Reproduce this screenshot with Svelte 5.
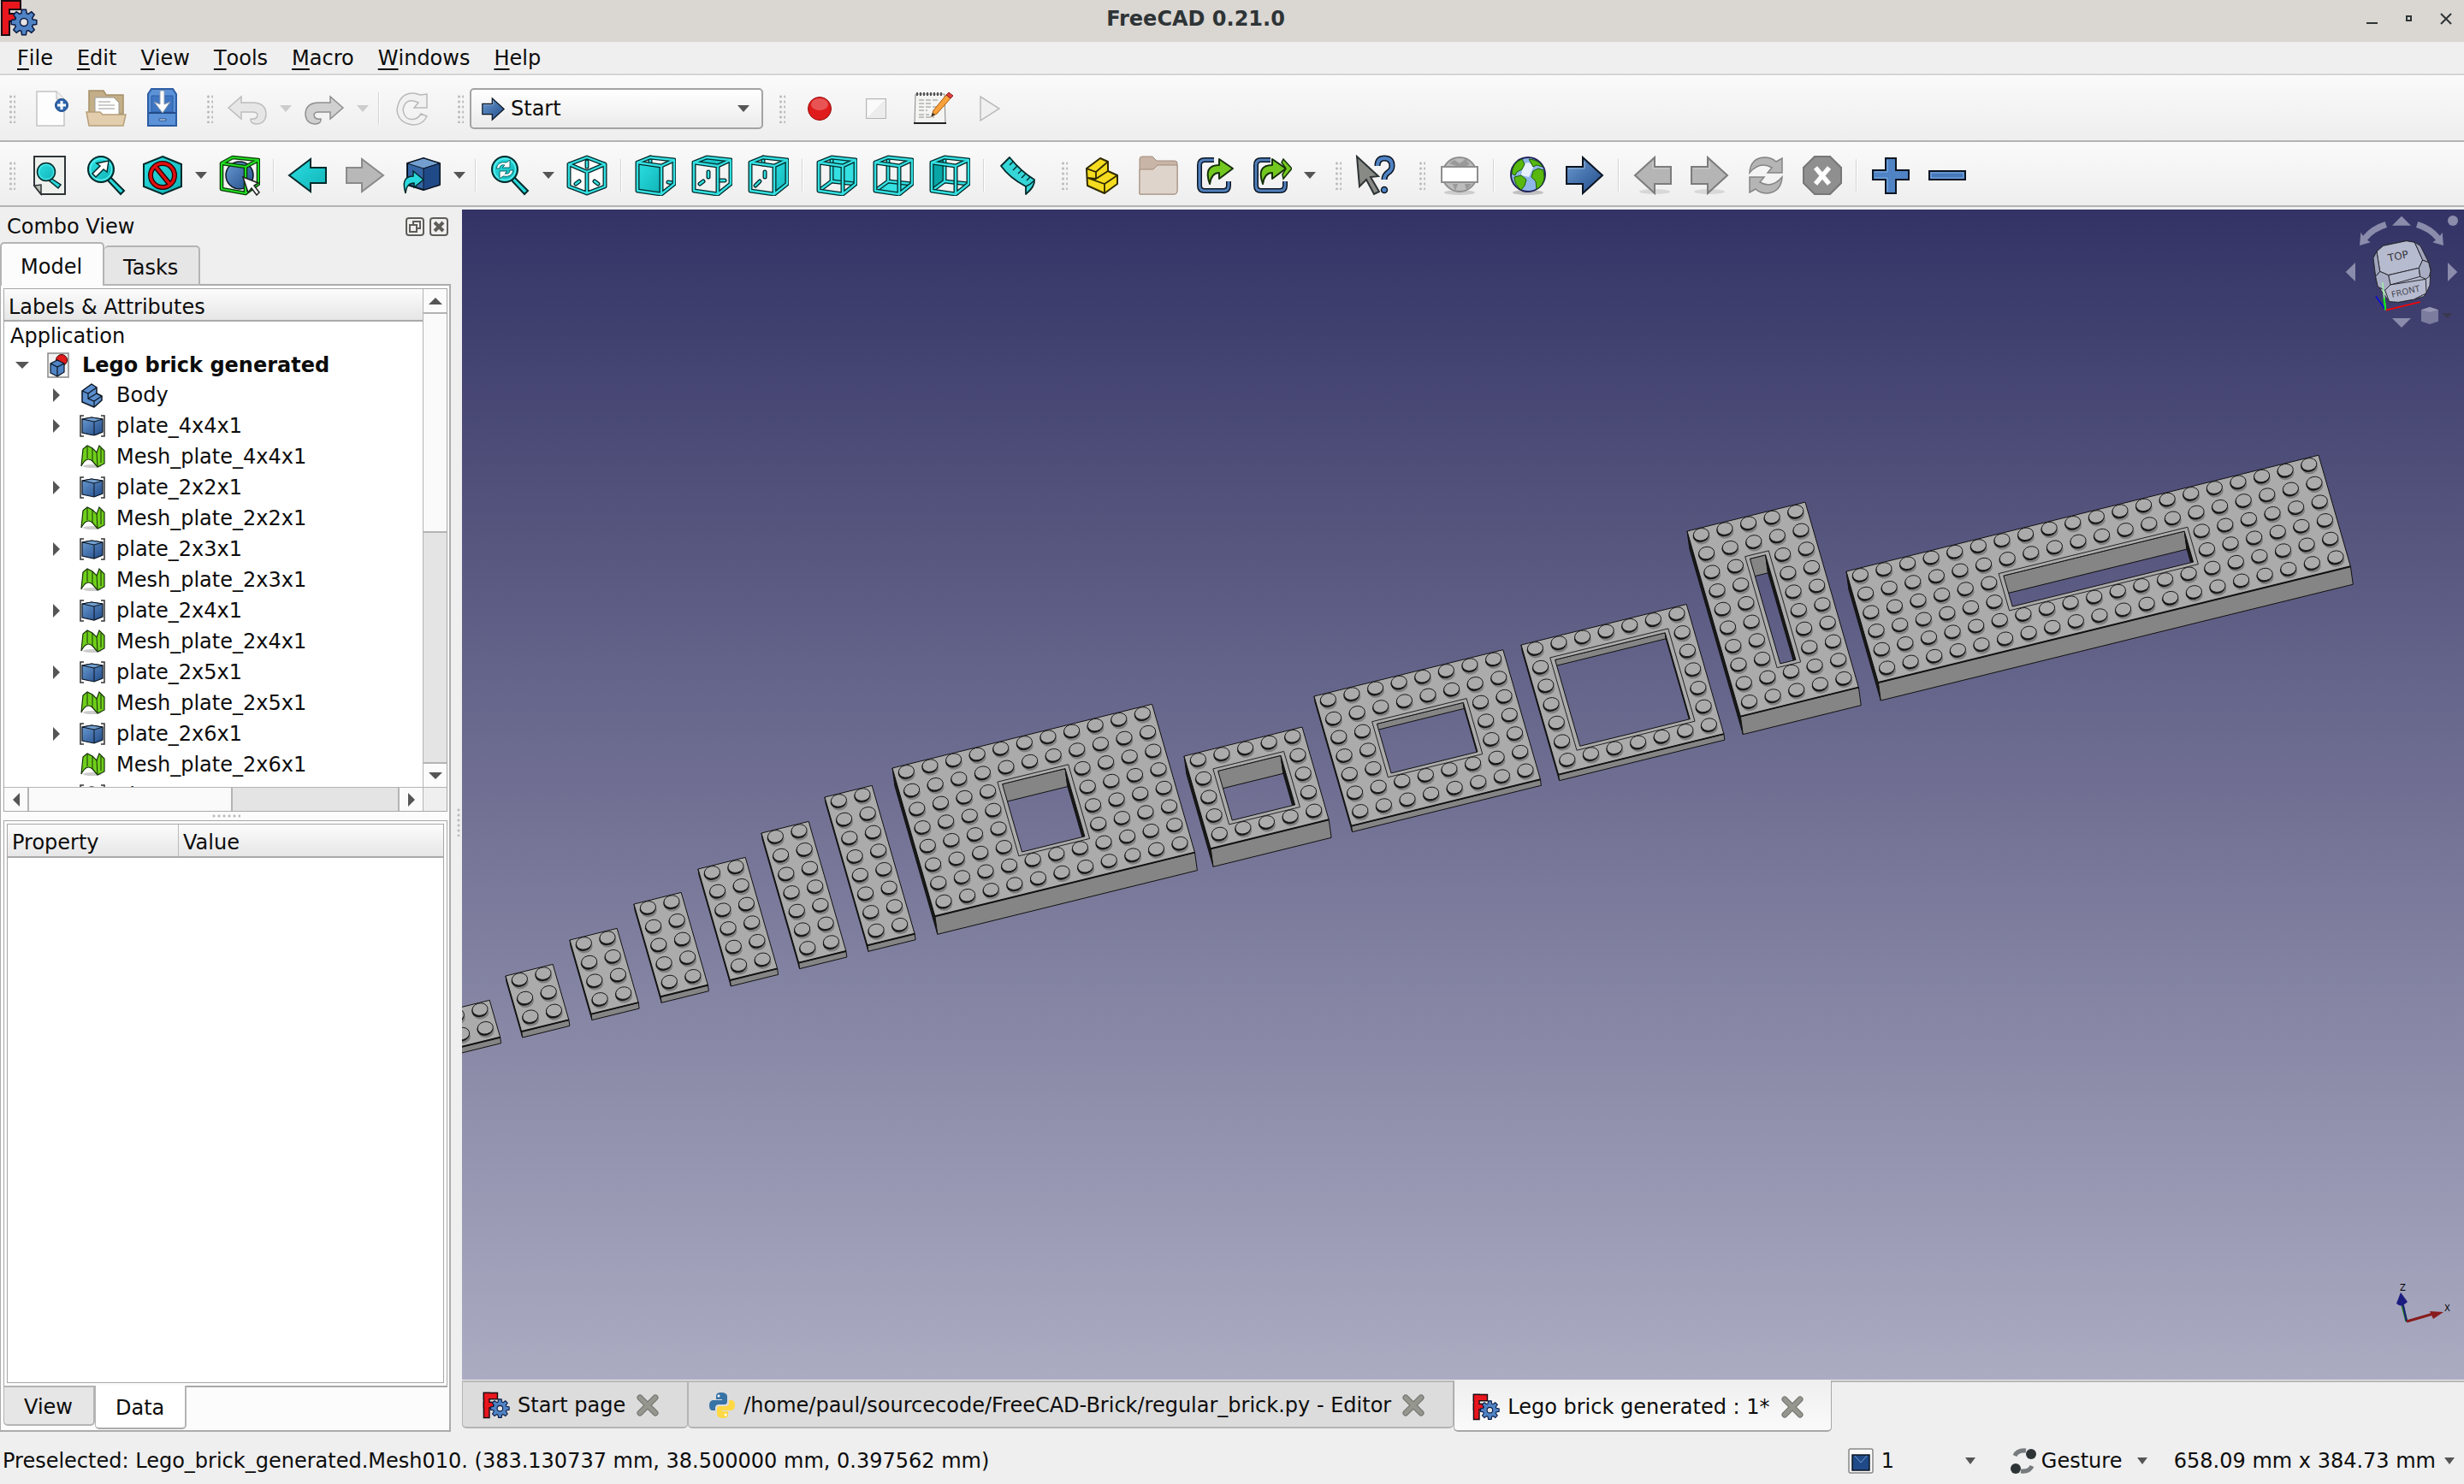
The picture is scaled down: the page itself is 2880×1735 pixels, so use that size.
<script>
  const menus = ['File', 'Edit', 'View', 'Tools', 'Macro', 'Windows', 'Help'];

  const fileBar = [
    [{ icon: 'new' }, { icon: 'open' }, { icon: 'save' }],
    [{ icon: 'undo', drop: true, off: true }, { icon: 'redo', drop: true, off: true }, { sep: true }, { icon: 'reload' }],
    [{ workbench: true }],
    [{ icon: 'record' }, { icon: 'stop' }, { icon: 'macro' }, { icon: 'play' }]
  ];

  const viewBar = [
    [
      { icon: 'fitall' }, { icon: 'fitsel' }, { icon: 'drawstyle', drop: true }, { icon: 'boxsel' }, { sep: true },
      { icon: 'back' }, { icon: 'forward' }, { icon: 'link', drop: true }, { sep: true },
      { icon: 'sync', drop: true }, { icon: 'iso' }, { sep: true },
      { icon: 'front' }, { icon: 'top' }, { icon: 'right' }, { sep: true },
      { icon: 'rear' }, { icon: 'bottom' }, { icon: 'left' }, { sep: true }, { icon: 'ruler' }
    ],
    [{ icon: 'part' }, { icon: 'group' }, { icon: 'export' }, { icon: 'exports', drop: true }],
    [{ icon: 'whats' }],
    [
      { icon: 'url' }, { sep: true }, { icon: 'globe' }, { icon: 'start' }, { sep: true },
      { icon: 'prev' }, { icon: 'next' }, { icon: 'refresh' }, { icon: 'cancel' }, { sep: true },
      { icon: 'plus' }, { icon: 'minus' }
    ]
  ];

  const rows = [{ kind: 'body', label: 'Body' }];
  for (const size of ['4x4x1', '2x2x1', '2x3x1', '2x4x1', '2x5x1', '2x6x1']) {
    rows.push({ kind: 'plate', label: 'plate_' + size });
    rows.push({ kind: 'mesh', label: 'Mesh_plate_' + size });
  }
  rows.push({ kind: 'plate', label: 'plate_2x7x1' });

  const docs = [
    { icon: 'logo', label: 'Start page' },
    { icon: 'python', label: '/home/paul/sourcecode/FreeCAD-Brick/regular_brick.py - Editor' },
    { icon: 'logo', label: 'Lego brick generated : 1*' }
  ];

  let sideTab = $state('Model');
  let propTab = $state('Data');
  let activeDoc = $state(2);

  // screen vectors of one stud along x, one stud along y, and one brick height
  const U = [27.6, -6.79];
  const V = [6.24, 21.66];
  const H = [2.9, 21];

  const bricks = [
    { x: -23, y: 938, nx: 2, ny: 2, h: 1 / 3 },
    { x: 51, y: 896, nx: 2, ny: 3, h: 1 / 3 },
    { x: 126, y: 854, nx: 2, ny: 4, h: 1 / 3 },
    { x: 201, y: 812, nx: 2, ny: 5, h: 1 / 3 },
    { x: 276, y: 771, nx: 2, ny: 6, h: 1 / 3 },
    { x: 350, y: 729, nx: 2, ny: 7, h: 1 / 3 },
    { x: 424, y: 687, nx: 2, ny: 8, h: 1 / 3 },
    { x: 503, y: 653, nx: 11, ny: 8, h: 1, hole: [4, 2, 3, 4] },
    { x: 844, y: 639, nx: 5, ny: 5, h: 1, hole: [1, 1, 3, 3] },
    { x: 996, y: 569, nx: 8, ny: 7, h: 1 / 3, hole: [2, 2, 4, 3] },
    { x: 1238, y: 509, nx: 7, ny: 7, h: 1 / 3, hole: [1, 1, 5, 5] },
    { x: 1432, y: 376, nx: 5, ny: 10, h: 1, hole: [2, 2, 1, 6] },
    { x: 1618, y: 423, nx: 20, ny: 6, h: 1, hole: [6, 2, 8, 2] }
  ].map(build);

  function build(b) {
    const at = (i, j, k = 0) => [
      b.x + i * U[0] + j * V[0] + k * H[0],
      b.y + i * U[1] + j * V[1] + k * H[1]
    ];
    const path = (...pts) => 'M' + pts.map((p) => p[0].toFixed(1) + ' ' + p[1].toFixed(1)).join('L') + 'Z';
    const { nx, ny, h, hole } = b;
    const top = path(at(0, 0), at(nx, 0), at(nx, ny), at(0, ny));
    const out = {
      top,
      edge: path(at(0, ny), at(nx, ny)),
      left: path(at(0, 0), at(0, ny), at(0, ny, h), at(0, 0, h)),
      front: path(at(0, ny), at(nx, ny), at(nx, ny, h), at(0, ny, h)),
      studs: []
    };
    if (hole) {
      const [c, r, w, d] = hole;
      const e = 0.17;
      const x0 = c + e, x1 = c + w - e, y0 = r + e, y1 = r + d - e;
      out.rim = path(at(c, r), at(c + w, r), at(c + w, r + d), at(c, r + d));
      out.hole = path(at(x0, y0), at(x1, y0), at(x1, y1), at(x0, y1));
      out.back = path(at(x0, y0), at(x1, y0), at(x1, y0, h), at(x0, y0, h));
      out.side = path(at(x1, y0), at(x1, y1), at(x1, y1, h), at(x1, y0, h));
    }
    for (let j = 0; j < ny; j++) {
      for (let i = 0; i < nx; i++) {
        if (hole && i >= hole[0] && i < hole[0] + hole[2] && j >= hole[1] && j < hole[1] + hole[3]) continue;
        out.studs.push(at(i + 0.5, j + 0.5, -0.17));
      }
    }
    return out;
  }

  function gear(cx, cy, r) {
    const pts = [];
    for (let i = 0; i < 8; i++) {
      for (const [da, k] of [[-0.3, 0.72], [-0.16, 1], [0.16, 1], [0.3, 0.72]]) {
        const a = (i * Math.PI) / 4 + da;
        pts.push((cx + Math.cos(a) * r * k).toFixed(1) + ',' + (cy + Math.sin(a) * r * k).toFixed(1));
      }
    }
    return pts.join(' ');
  }

  const cubeFaces = {
    front: 'M3 9L31 13V46L3 42Z',
    top: 'M3 9L18 3L46 6L31 13Z',
    right: 'M31 13L46 6V34L31 46Z',
    rear: 'M18 3L46 6V34L18 31Z',
    bottom: 'M3 42L18 31L46 34L31 46Z',
    left: 'M3 9L18 3V31L3 42Z'
  };
  const shell = 'M3 9L31 13V46L3 42ZM3 9L18 3L46 6L31 13M46 6V34L31 46';
  const inner = 'M18 3V31L46 34M18 31L3 42';
  const marks = {
    front: 'M18 3V10M39 32L45 33',
    top: 'M20 20V26M10 34L14 31M33 30L39 30',
    right: 'M18 3V11M20 20V26M9 36L14 31'
  };
</script>

{#snippet logo()}
  <svg class="logo" viewBox="0 0 44 42">
    <g fill="#1a0d12"><rect width="11" height="42" x="1" /><rect x="1" width="24" height="12" /><rect x="1" y="15" width="18" height="11" /></g>
    <g fill="#e8161d"><rect x="3" y="2" width="7" height="38" /><rect x="3" y="2" width="20" height="8" /><rect x="3" y="17" width="14" height="7" /></g>
    <polygon points={gear(28, 26, 15)} fill="#4f83c4" stroke="#0b1a45" stroke-width="1.5" />
    <circle cx="28" cy="26" r="4.5" fill="#e6e4e2" stroke="#0b1a45" stroke-width="1.5" />
  </svg>
{/snippet}

{#snippet arrow(fill, stroke, flip)}
  <g transform={flip ? 'matrix(-1 0 0 1 48 0)' : null}>
    <path d="M3 14H22V3L45 24L22 45V34H3Z" {fill} {stroke} stroke-width="2" />
    <path d="M5 16H24V8" fill="none" stroke="#fff" stroke-opacity=".4" />
  </g>
{/snippet}

{#snippet lens()}
  <path d="M29 26L45 42L41 46L26 30Z" fill="#2ad9dc" stroke="#042a2a" stroke-width="2" />
  <circle cx="18" cy="17" r="15" fill="url(#teal)" stroke="#042a2a" stroke-width="2" />
  <circle cx="18" cy="17" r="12.5" fill="none" stroke="#5cf0f0" stroke-width="1.5" />
{/snippet}

{#snippet icon(name)}
  <svg class="icon" viewBox="0 0 48 48">
    {#if name === 'new'}
      <path d="M9 4H32L41 13V44H9Z" fill="#fdfdfd" stroke="#c4c4c4" stroke-width="1.5" />
      <path d="M32 4V13H41" fill="#eee" stroke="#bbb" />
      <circle cx="38" cy="20" r="7.5" fill="#2f66ac" stroke="#1c4a8a" />
      <path d="M38 15V25M33 20H43" stroke="#fff" stroke-width="3" />
    {:else if name === 'open'}
      <path d="M4 3H21L24 8H44V30H4Z" fill="#c3ae88" stroke="#a58e66" stroke-width="1.5" />
      <path d="M11 11H33L39 17V34H11Z" fill="#fff" stroke="#9a9a9a" />
      <path d="M15 16H29M15 20H34M15 24H34" stroke="#bbb" stroke-width="1.5" />
      <path d="M1 28H17L20 31H47L44 44H4Z" fill="#e2cdac" stroke="#b79f78" stroke-width="1.5" />
    {:else if name === 'save'}
      <path d="M11 1H36L40 7V44H7V7Z" fill="#5b92d8" stroke="#2c5ca3" stroke-width="2" />
      <path d="M11 9H36V28H11Z" fill="#3f76c2" stroke="#2c5ca3" />
      <path d="M8 29H39" stroke="#234b88" stroke-width="2" />
      <path d="M20 36H28V38H20Z" fill="#fff" stroke="#234b88" />
      <path d="M21 3H26V19L33 16L24 29L14 16L21 19Z" fill="#fff" stroke="#8a9bb0" />
    {:else if name === 'undo' || name === 'redo'}
      <g transform={name === 'redo' ? 'matrix(-1 0 0 1 48 0)' : null}>
        <path d="M2 23L17 10V17H32Q46 18 46 31Q45 42 34 42Q27 41 28 36Q36 37 36 31Q35 28 31 28H17V36Z"
          fill={name === 'redo' ? '#d0d0d0' : '#e6e6e6'} stroke={name === 'redo' ? '#8f8f8f' : '#bdbdbd'} stroke-width="1.5" />
      </g>
    {:else if name === 'reload'}
      <path d="M32 8L40 7V23H25L30 17Q15 10 12 25Q14 39 26 36Q30 35 33 30L40 33Q35 43 24 43Q6 41 5 25Q8 5 25 6Q30 7 32 8Z" fill="#f1f1f1" stroke="#b9b9b9" stroke-width="1.5" />
    {:else if name === 'record'}
      <circle cx="24" cy="24" r="13.5" fill="#e01b1b" stroke="#9a0b0b" />
      <ellipse cx="24" cy="19" rx="10" ry="7" fill="#fff" opacity=".25" />
    {:else if name === 'stop'}
      <rect x="12.5" y="12.5" width="23" height="23" fill="#ececec" stroke="#b5b5b5" /><path d="M14 34V14H34Z" fill="#fafafa" />
    {:else if name === 'macro'}
      <path d="M4 7H38L39 41H3Z" fill="#f4f4f2" stroke="#888" />
      <path d="M2 41H40" stroke="#222" stroke-width="2" />
      <path d="M6 5V9M10 5V9M14 5V9M18 5V9M22 5V9M26 5V9M30 5V9M34 5V9" stroke="#555" stroke-width="2" />
      <path d="M8 14H30M8 18H24M8 22H30M8 26H18M8 31H20M8 34H26" stroke="#b0b0b0" stroke-width="1.5" stroke-dasharray="6 2" />
      <path d="M23 33L25 26L40 8L45 12L29 30Z" fill="#f9a13b" stroke="#a85a08" />
      <path d="M40 8L43 5L48 9L45 12Z" fill="#e04040" stroke="#8c2020" /><path d="M22 34L24 29L27 31Z" fill="#333" />
    {:else if name === 'play'}
      <path d="M14 10L36 24L14 38Z" fill="#f0f0f0" stroke="#bcbcbc" stroke-width="1.5" />
    {:else if name === 'fitall'}
      <path d="M6 2H42V46H14L6 36Z" fill="#edf0ec" stroke="#2e3436" stroke-width="2" />
      <path d="M6 36L14 35V46Z" fill="#babdb6" stroke="#2e3436" stroke-width="1.5" />
      <path d="M25 27L37 35L34 39L22 29Z" fill="#2ad9dc" stroke="#042a2a" stroke-width="1.5" />
      <circle cx="20" cy="20" r="10.5" fill="url(#teal)" stroke="#042a2a" stroke-width="1.5" />
      <circle cx="20" cy="20" r="8.5" fill="none" stroke="#5cf0f0" />
    {:else if name === 'fitsel'}
      {@render lens()}
      <path d="M27 7L25 20L21 17L12 26L8 22L17 13L13 10Z" fill="#fff" stroke="#042a2a" stroke-width="1.5" />
    {:else if name === 'drawstyle'}
      <path d="M24 2L46 11V37L24 46L2 37V11Z" fill="url(#teal)" stroke="#042a2a" stroke-width="2" />
      <g fill="none" stroke="#280000" stroke-width="6"><circle cx="24" cy="24" r="14" /><path d="M15 13L33 35" /></g>
      <g fill="none" stroke="#e01010" stroke-width="3.4"><circle cx="24" cy="24" r="14" /><path d="M15 13L33 35" /></g>
    {:else if name === 'boxsel'}
      <ellipse cx="24" cy="24" rx="16" ry="16" fill="url(#blue)" stroke="#0b1521" stroke-width="1.5" />
      <path d="M3 10L16 3L46 6L31 14ZM3 10V40L31 45V14M46 6V34L31 45" fill="none" stroke="#0a3a0a" stroke-width="4.6" stroke-linejoin="round" />
      <path d="M3 10L16 3L46 6L31 14ZM3 10V40L31 45V14M46 6V34L31 45" fill="none" stroke="#1fdc1f" stroke-width="2" stroke-linejoin="round" />
      <path d="M28 26L46 33L41 36L47 44L44 47L38 39L34 44Z" fill="#fff" stroke="#222" stroke-width="1.5" />
    {:else if name === 'back'}
      <path d="M2 24L27 5V15H45V33H27V43Z" fill="url(#teal)" stroke="#042a2a" stroke-width="2" />
    {:else if name === 'forward'}
      <path d="M46 24L21 5V15H3V33H21V43Z" fill="#b8b8b8" stroke="#8a8a8a" stroke-width="2" />
    {:else if name === 'link'}
      <path d="M8 10L27 4L46 10V35L27 41L8 35Z" fill="#3465a4" stroke="#0b1521" stroke-width="2" stroke-linejoin="round" />
      <path d="M8 10L27 4L46 10L27 16Z" fill="#729fcf" stroke="#0b1521" /><path d="M27 16L46 10V35L27 41Z" fill="#204a87" stroke="#0b1521" />
      <path d="M6 45Q0 25 15 25V19L27 29L16 38V33Q7 33 6 45Z" fill="#2ad9dc" stroke="#042a2a" stroke-width="1.5" />
    {:else if name === 'sync'}
      {@render lens()}
      <path d="M8 16Q10 7 20 9L24 6V15H15L18 12Q12 11 12 16ZM28 18Q26 27 16 25L12 28V19H21L18 22Q24 23 24 18Z" fill="#fff" stroke="#06686a" />
    {:else if name === 'iso'}
      <path d="M24 2L46 11V37L24 46L2 37V11Z" fill="#fff" />
      {#each [['#042a2a', 5], ['#34e0e2', 2.4]] as [c, w]}
        <path d="M24 3L45 11V37L24 45L3 37V11ZM3 11L24 20L45 11M24 20V45M24 8V14M15 31L11 34M33 31L37 34" fill="none" stroke={c} stroke-width={w} stroke-linejoin="round" stroke-linecap="round" />
      {/each}
    {:else if cubeFaces[name]}
      {#if marks[name]}
        {#each [['#042a2a', 5], ['#34e0e2', 2.4]] as [c, w]}
          <path d={marks[name]} fill="none" stroke={c} stroke-width={w} stroke-linecap="round" />
        {/each}
        <path d={cubeFaces[name]} fill="url(#teal)" />
      {:else}
        <path d={cubeFaces[name]} fill={name === 'left' ? '#08a5a7' : '#34e0e2'} />
        <path d={inner} fill="none" stroke="#042a2a" stroke-width="5" />
        <path d={inner} fill="none" stroke="#34e0e2" stroke-width="2.4" />
      {/if}
      {#each [['#042a2a', 5], ['#34e0e2', 2.4]] as [c, w]}
        <path d={shell} fill="none" stroke={c} stroke-width={w} stroke-linejoin="round" />
      {/each}
    {:else if name === 'ruler'}
      <path d="M4 13L14 3Q28 20 43 29Q44 37 33 46V37Q14 27 4 13Z" fill="#34d6d8" stroke="#042a2a" stroke-width="1.8" stroke-linejoin="round" />
      <path d="M18 8L14 12M23 13L18 18M28 18L24 22M33 22L28 27M38 26L34 30M33 37Q38 35 43 30" fill="none" stroke="#042a2a" stroke-width="1.4" />
    {:else if name === 'part'}
      <path d="M6 16L22 4L31 8V19L42 24V34L27 45L7 36Z" fill="#f5dc1e" stroke="#302b00" stroke-width="2" stroke-linejoin="round" />
      <path d="M6 16L17 20L31 8M17 20V28L31 19M7 27L27 34L42 24M27 34V45M17 28L7 27" fill="none" stroke="#302b00" stroke-width="1.8" />
    {:else if name === 'group'}
      <path d="M2 5Q2 2 5 2H17L22 7H43Q46 7 46 10V42Q46 46 43 46H2Z" fill="#c9b5a7" stroke="#a08b7c" />
      <path d="M2 17H18L23 12H46V42Q46 46 43 46H2Z" fill="#ded4cb" stroke="#a08b7c" />
    {:else if name === 'export' || name === 'exports'}
      <path d="M23 6H12Q6 6 6 12V36Q6 42 12 42H34Q40 42 40 36V31" fill="none" stroke="#0b1521" stroke-width="6" />
      <path d="M23 6H12Q6 6 6 12V36Q6 42 12 42H34Q40 42 40 36V31" fill="none" stroke="#5080bd" stroke-width="3" />
      <path d="M18 34Q10 12 29 12V5L45 16L29 28V21Q20 21 18 34Z" fill="#73c820" stroke="#16300a" stroke-width="2" stroke-linejoin="round" transform={name === 'exports' ? 'translate(-4 0)' : null} />
      {#if name === 'exports'}<path d="M38 5L48 16L38 28L37 23L41 16L36 9Z" fill="#73c820" stroke="#16300a" stroke-width="1.5" />{/if}
    {:else if name === 'whats'}
      <path d="M2 2L27 25L18 26L28 43L22 46L13 29L5 37Z" fill="#888a85" stroke="#2e3436" stroke-width="2" />
      <path d="M26 13Q26 4 34 4Q43 4 43 13Q43 18 38 21Q34 24 34 29" fill="none" stroke="#0b1521" stroke-width="7" />
      <path d="M26 13Q26 4 34 4Q43 4 43 13Q43 18 38 21Q34 24 34 29" fill="none" stroke="#4f83c4" stroke-width="4" />
      <circle cx="34" cy="41" r="3.5" fill="#4f83c4" stroke="#0b1521" stroke-width="1.5" />
    {:else if name === 'url'}
      <ellipse cx="24" cy="44" rx="18" ry="3" fill="#000" opacity=".15" />
      <circle cx="24" cy="23" r="20" fill="#bcbcbc" stroke="#8e8e8e" stroke-width="2" />
      <path d="M12 10L18 6L24 10L31 5L36 11L28 15L20 13ZM16 34H22L19 42ZM30 34H38L32 41Z" fill="#999" />
      <rect x="3" y="14" width="42" height="18" fill="#fff" stroke="#8e8e8e" stroke-width="2" />
    {:else if name === 'globe'}
      <ellipse cx="24" cy="44" rx="18" ry="3" fill="#000" opacity=".2" />
      <circle cx="24" cy="23" r="20" fill="#8fb6e8" stroke="#23235c" stroke-width="2" />
      <path d="M18 12Q26 5 30 15L25 26L16 24Z" fill="#e6f0ff" />
      <path d="M5 22Q6 9 17 5L20 11L17 17L11 20L9 24ZM8 26L16 24L22 29L20 36L16 41Q8 35 8 26ZM25 5Q37 6 41 14L34 12L30 14ZM30 19L36 16L42 18L43 26Q42 36 34 40L33 31L28 26Z" fill="#58b810" stroke="#1c5a06" />
    {:else if name === 'start'}
      {@render arrow('url(#blue)', '#0b1521', false)}
    {:else if name === 'prev'}
      <ellipse cx="26" cy="43" rx="18" ry="3" fill="#000" opacity=".1" />{@render arrow('#b5b5b5', '#7c7c7c', true)}
    {:else if name === 'next'}
      <ellipse cx="24" cy="43" rx="18" ry="3" fill="#000" opacity=".1" />{@render arrow('#b5b5b5', '#7c7c7c', false)}
    {:else if name === 'refresh'}
      <path d="M5 21Q6 4 22 3Q31 3 36 8L43 4V21H26L31 15Q17 7 5 21ZM43 26Q42 43 26 45Q17 45 12 40L5 44V26H22L17 32Q31 40 43 26Z" fill="#b5b5b5" stroke="#858585" stroke-width="1.5" />
    {:else if name === 'cancel'}
      <path d="M15 2H33L46 15V33L33 46H15L2 33V15Z" fill="#8f8f8f" stroke="#777" stroke-width="2" />
      <path d="M16 15L32 34M32 15L16 34" stroke="#fff" stroke-width="5.5" />
    {:else if name === 'plus'}
      <path d="M18 4H30V18H45V29H30V45H18V29H3V18H18Z" fill="#4f83c4" stroke="#0b1521" stroke-width="2" />
      <path d="M20 43V27H5M20 6V20H5" fill="none" stroke="#7fb0e6" />
    {:else if name === 'minus'}
      <rect x="3" y="19" width="42" height="10" fill="#4678ba" stroke="#0b1521" stroke-width="2" /><rect x="5" y="21" width="38" height="6" fill="none" stroke="#7fb0e6" />
    {/if}
  </svg>
{/snippet}

{#snippet toolbar(groups)}
  <div class="toolbar">
    {#each groups as group}
      <div class="group">
        <span class="handle"></span>
        {#each group as item}
          {#if item.sep}
            <span class="sep"></span>
          {:else if item.workbench}
            <div class="workbench">
              <svg viewBox="0 0 48 48">{@render arrow('url(#blue)', '#0b1521', false)}</svg>
              <select aria-label="Workbench"><option>Start</option><option>Part</option><option>Part Design</option></select>
              <span class="caret"></span>
            </div>
          {:else}
            <button class="tool" aria-label={item.icon}>{@render icon(item.icon)}</button>
            {#if item.drop}
              <button class="drop" aria-label="{item.icon} options"><span class="caret" class:off={item.off}></span></button>
            {/if}
          {/if}
        {/each}
      </div>
    {/each}
  </div>
{/snippet}

<svg class="defs" aria-hidden="true">
  <defs>
    <linearGradient id="teal" x1="0" y1="0" x2="1" y2="1"><stop offset="0" stop-color="#2ce0e2" /><stop offset="1" stop-color="#0fb2b6" /></linearGradient>
    <linearGradient id="blue" x1="0" y1="0" x2="1" y2="1"><stop offset="0" stop-color="#6b9bd2" /><stop offset="1" stop-color="#204a87" /></linearGradient>
  </defs>
</svg>

<div class="app">
  <header class="titlebar">
    {@render logo()}
    <h1>FreeCAD 0.21.0</h1>
    <button aria-label="Minimize"><svg viewBox="0 0 14 14"><path d="M0 12H13" /></svg></button>
    <button aria-label="Maximize"><svg viewBox="0 0 14 14"><path d="M4 4H9V9H4Z" /></svg></button>
    <button aria-label="Close"><svg viewBox="0 0 14 14"><path d="M1 1L13 13M13 1L1 13" /></svg></button>
  </header>

  <nav class="menubar">
    {#each menus as menu}
      <button><u>{menu[0]}</u>{menu.slice(1)}</button>
    {/each}
  </nav>

  {@render toolbar(fileBar)}
  {@render toolbar(viewBar)}

  <main>
    <aside>
      <div class="dock-title">
        <h2>Combo View</h2>
        <button aria-label="Float"><svg viewBox="0 0 22 22"><rect x="1" y="1" width="20" height="20" rx="3" /><path d="M9 8V5H17V13H14M5 9H13V17H5Z" /></svg></button>
        <button aria-label="Close"><svg viewBox="0 0 22 22"><rect x="1" y="1" width="20" height="20" rx="3" /><path d="M6 6L16 16M16 6L6 16" stroke-width="4" /></svg></button>
      </div>
      <div class="tabs">
        {#each ['Model', 'Tasks'] as tab}
          <button class:active={sideTab === tab} onclick={() => (sideTab = tab)}>{tab}</button>
        {/each}
      </div>
      <div class="pane">
        <section class="tree">
          <div class="tree-view">
            <div class="tree-head">Labels &amp; Attributes</div>
            <ul>
              <li class="app-row">Application</li>
              <li class="doc-row">
                <span class="twist open"></span>
                <svg class="doc-icon" viewBox="0 0 26 30">
                  <rect x="1" y="1" width="24" height="28" fill="#f2f2f2" stroke="#888" stroke-width="1.5" />
                  <circle cx="17" cy="9" r="6.5" fill="#e01b1b" stroke="#400" />
                  <path d="M4 13L12 9L20 13V23L12 28L4 24Z" fill="#4f83c4" stroke="#0b1521" stroke-width="1.2" />
                  <path d="M4 13L12 17L20 13M12 17V28" fill="none" stroke="#0b1521" stroke-width="1.2" />
                </svg>
                Lego brick generated
              </li>
              {#each rows as row}
                <li>
                  <span class="twist" class:none={row.kind === 'mesh'}></span>
                  <svg class="row-icon" viewBox="0 0 30 30">
                    {#if row.kind === 'body'}
                      <path d="M3 10L14 2L20 6V13L26 16V21L17 29L3 23Z" fill="#5b8fce" stroke="#0b1521" stroke-width="1.5" stroke-linejoin="round" />
                      <path d="M3 10L10 13L20 6M10 13V19L17 22L26 16M10 19L20 13M17 22V29" fill="none" stroke="#0b1521" stroke-width="1.2" />
                    {:else if row.kind === 'plate'}
                      <path d="M5 3H1V27H5M25 3H29V27H25" fill="none" stroke="#333" stroke-width="1.5" />
                      <path d="M3 7L14 5L27 7V22L17 26L3 23Z" fill="url(#blue)" stroke="#0b1521" stroke-width="1.2" />
                      <path d="M3 7L14 5L27 7L17 10Z" fill="#729fcf" stroke="#0b1521" /><path d="M17 10V26" stroke="#0b1521" />
                    {:else}
                      <ellipse cx="15" cy="26" rx="11" ry="2" fill="#000" opacity=".2" />
                      <path d="M2 26L4 6L9 2L15 5L20 10L23 2L29 8V23L21 27L15 20Q8 14 2 26Z" fill="#6fcf1a" stroke="#16300a" stroke-width="1.2" />
                      <path d="M9 2V17M15 5V20M20 10L21 27M25 5V22" stroke="#16300a" />
                    {/if}
                  </svg>
                  {row.label}
                </li>
              {/each}
            </ul>
          </div>
          <div class="vscroll"><button aria-label="Up"><i class="up"></i></button><div class="thumb"></div><div class="track"></div><button aria-label="Down"><i class="down"></i></button></div>
          <div class="hscroll"><button aria-label="Left"><i class="lt"></i></button><div class="thumb"></div><div class="track"></div><button aria-label="Right"><i class="rt"></i></button></div>
          <div class="corner"></div>
        </section>
        <div class="splitter"></div>
        <section class="props">
          <div class="props-frame">
            <div class="props-inner">
              <table>
                <thead><tr><th class="prop">Property</th><th>Value</th></tr></thead>
              </table>
            </div>
          </div>
          <div class="tabs low">
            {#each ['View', 'Data'] as tab}
              <button class:active={propTab === tab} onclick={() => (propTab = tab)}>{tab}</button>
            {/each}
          </div>
        </section>
      </div>
    </aside>
    <div class="vsplit"></div>

    <div class="mdi">
      <div class="viewport">
        <svg viewBox="0 0 2340 1368" preserveAspectRatio="xMaxYMin slice">
          <defs>
            <!-- the stud circle sheared into the plane of the top faces -->
            <g id="stud">
              <circle r="0.33" transform="matrix(27.6 -6.79 6.24 21.66 1 4)" fill="#808080" />
              <circle r="0.33" transform="matrix(27.6 -6.79 6.24 21.66 -0.4 1.6)" fill="#151515" />
              <circle r="0.32" transform="matrix(27.6 -6.79 6.24 21.66 0 0)" fill="#ababab" stroke="#181818" stroke-width="1" vector-effect="non-scaling-stroke" />
            </g>
          </defs>
          {#each bricks as b, n}
            <path d={b.left} fill="#181818" stroke="#111" />
            <path d={b.front} fill="#858585" stroke="#111" />
            {#if b.hole}
              <clipPath id="hole{n}"><path d={b.hole} /></clipPath>
              <g clip-path="url(#hole{n})">
                <path d={b.back} fill="#858585" stroke="#111" />
                <path d={b.side} fill="#181818" stroke="#111" />
              </g>
            {/if}
            <path d="{b.top}{b.hole ?? ''}" fill="#ababab" fill-rule="evenodd" stroke="#111" />
            <path d={b.edge} stroke="#111" stroke-width="2" />
            {#if b.rim}<path d={b.rim} fill="none" stroke="#222" />{/if}
            {#each b.studs as [x, y]}
              <use href="#stud" {x} {y} />
            {/each}
          {/each}

          <g transform="translate(2100 -245) scale(.33333)" fill="#8b8bab">
            <path d="M501 758L534 791H468ZM501 1149L468 1116H534ZM305 954L339 921V987ZM697 954L663 921V987Z" />
            <path d="M443 777Q395 792 366 827L358 815L354 861L392 850L381 842Q408 810 450 798ZM559 777Q607 792 636 827L644 815L648 861L610 850L621 842Q594 810 552 798Z" />
            <circle cx="681" cy="774" r="18" />
            <path d="M570 1087L600 1077L630 1087V1127L600 1137L570 1127Z" fill="#7c7c9f" /><path d="M570 1087L600 1077L630 1087L600 1095Z" fill="#9696b4" />
            <path d="M642 1098H679L661 1116Z" fill="#3a3850" />
            <g fill="#b7bbcf" stroke="#26262e" stroke-width="3" stroke-linejoin="round">
              <path d="M402 905L414 882L437 862L518 845L547 850L567 862L596 920L603 945L600 1000L588 1028L578 1040L545 1050L490 1060L458 1058L430 1020L412 985Z" />
              <path d="M414 882L437 862L518 845L547 850L575 912L562 940L455 965L425 952Z" />
              <path d="M455 965L562 940L566 970L462 999Z" />
              <path d="M425 952L455 965L462 999L443 1018L418 1006L410 970Z" fill="#a9adc4" />
              <path d="M562 940L575 912L596 920L603 950L598 970L586 979L566 970Z" fill="#a9adc4" />
              <path d="M462 999L586 979L588 1028L545 1050L490 1060L458 1058L443 1018Z" />
              <path d="M547 850L567 862L596 920L575 912ZM402 905L414 882L425 952L410 970Z" fill="#a0a4bc" />
            </g>
            <path d="M445 1087L411 1039" stroke="#0000f0" stroke-width="4" />
            <path d="M445 1087L434 990" stroke="#a0f0a8" stroke-width="5" /><path d="M445 1087L439 1046" stroke="#00ee10" stroke-width="6" />
            <path d="M447 1088L567 1059" stroke="#f00" stroke-width="5" />
          </g>
          <text class="face" transform="translate(2252 61) rotate(-12)">TOP</text>
          <text class="face small" transform="translate(2256 103) rotate(-13)">FRONT</text>

          <path d="M2273 1300L2268 1281" stroke="#188018" stroke-width="3" />
          <path d="M2273 1300L2269 1281" stroke="#1c1c80" stroke-width="2" />
          <path d="M2266 1266L2261 1279L2264 1281L2268 1282L2274 1277Z" fill="#1c1c80" />
          <path d="M2273 1300L2304 1291" stroke="#881c1c" stroke-width="3" />
          <path d="M2300 1288L2316 1289L2304 1297Z" fill="#881c1c" />
          <text class="axis" x="2265" y="1264">Z</text>
          <text class="axis" x="2317" y="1288">X</text>
        </svg>
      </div>
      <div class="doctabs">
        {#each docs as doc, n}
          <div class="doctab" class:active={activeDoc === n}>
            <button class="doclabel" onclick={() => (activeDoc = n)}>
              {#if doc.icon === 'logo'}
                {@render logo()}
              {:else}
                <svg class="logo" viewBox="0 0 32 32">
                  <path d="M15 1Q9 1 9 5V9H16V10H5Q1 11 1 16Q1 22 5 22H8V18Q9 15 12 15H19Q22 15 22 11V5Q21 1 15 1Z" fill="#3773a5" />
                  <path d="M17 31Q23 31 23 27V23H16V22H27Q31 21 31 16Q31 10 27 10H24V14Q23 17 20 17H13Q10 17 10 21V27Q11 31 17 31Z" fill="#ffd845" />
                  <circle cx="12" cy="5" r="1.5" fill="#fff" /><circle cx="20" cy="27" r="1.5" fill="#fff" />
                </svg>
              {/if}
              {doc.label}
            </button>
            <button class="docclose" aria-label="Close {doc.label}">
              <svg viewBox="0 0 28 28"><path d="M5 5L23 23M23 5L5 23" stroke="#6f716c" stroke-width="7" stroke-linecap="round" /><path d="M5 5L23 23M23 5L5 23" stroke="#95978f" stroke-width="5" stroke-linecap="round" /></svg>
            </button>
          </div>
        {/each}
      </div>
    </div>
  </main>

  <footer>
    <span class="message">Preselected: Lego_brick_generated.Mesh010. (383.130737 mm, 38.500000 mm, 0.397562 mm)</span>
    <button class="notify">
      <svg viewBox="0 0 30 30"><rect x="1" y="1" width="28" height="28" rx="2" fill="#fafafa" stroke="#888" stroke-width="1.5" /><rect x="5" y="8" width="20" height="18" fill="#204a87" stroke="#0b1521" stroke-width="1.5" /><path d="M8 9L15 17L22 9" fill="none" stroke="#729fcf" /></svg>
      <span>1</span><i class="caret"></i>
    </button>
    <button class="nav">
      <svg viewBox="0 0 30 30"><path d="M5 9Q8 2 18 3M25 21Q22 28 12 27" fill="none" stroke="#777b7e" stroke-width="5" /><ellipse cx="24" cy="7" rx="6" ry="6" fill="#2e3436" /><ellipse cx="6" cy="24" rx="6" ry="6" fill="#2e3436" /></svg>
      <span>Gesture</span><i class="caret"></i>
    </button>
    <button class="dims"><span>658.09 mm x 384.73 mm</span><i class="caret"></i></button>
  </footer>
</div>

<style>
  :global(body) {
    background: #efefef;
  }

  .app {
    display: flex;
    flex-direction: column;
    height: 100vh;
    overflow: hidden;
    background: #efefef;
    color: #0c0c0c;
    font: 24px/28px 'DejaVu Sans', sans-serif;
  }

  .defs {
    position: absolute;
    width: 0;
    height: 0;
  }

  button {
    display: flex;
    align-items: center;
    margin: 0;
    padding: 0;
    border: 0;
    background: none;
    color: inherit;
    font: inherit;
    white-space: nowrap;
  }

  svg {
    display: block;
    flex: none;
  }

  h1,
  h2 {
    margin: 0;
    font-size: 24px;
  }

  .titlebar {
    display: flex;
    flex: none;
    height: 49px;
    background: #dad6d2;
  }

  .titlebar .logo {
    width: 44px;
    height: 42px;
  }

  h1 {
    flex: 1;
    color: #2e3436;
    line-height: 44px;
    text-align: center;
  }

  .titlebar button {
    justify-content: center;
    width: 43px;
    height: 43px;
  }

  .titlebar button svg {
    width: 14px;
    height: 14px;
    fill: none;
    stroke: #2e3436;
    stroke-width: 2;
  }

  .menubar {
    display: flex;
    flex: none;
    height: 37px;
    padding-left: 6px;
    border-bottom: 2px solid #d5d5d5;
  }

  .menubar button {
    padding: 0 14px;
  }

  u {
    text-decoration-thickness: 2px;
    text-underline-offset: 4px;
  }

  .toolbar {
    display: flex;
    flex: none;
    gap: 8px;
    height: 78px;
    padding-top: 2px;
    border-bottom: 2px solid #b4b4b4;
    box-sizing: border-box;
    background: linear-gradient(#fafafa, #eee);
  }

  .toolbar + .toolbar {
    gap: 7px;
    height: 76px;
    margin-bottom: 3px;
    padding-top: 4px;
  }

  .group {
    display: flex;
    align-items: center;
  }

  .handle {
    width: 8px;
    height: 34px;
    margin: 0 7px 0 10px;
    background: radial-gradient(circle, #bbb 1px, transparent 2px) 0 0 / 5px 6px;
  }

  .tool {
    justify-content: center;
    width: 66px;
    height: 66px;
  }

  .icon {
    width: 48px;
    height: 48px;
  }

  .sep {
    width: 2px;
    height: 38px;
    margin: 0 6px;
    background: linear-gradient(90deg, #d4d4d4 50%, #fff 50%);
  }

  .drop {
    justify-content: center;
    width: 24px;
    height: 66px;
  }

  .caret {
    border: 7px solid transparent;
    border-top: 8px solid #555;
    border-bottom: 0;
  }

  .caret.off {
    border-top-color: #ccc;
  }

  .workbench {
    position: relative;
    width: 343px;
  }

  .workbench svg {
    position: absolute;
    top: 10px;
    left: 13px;
    width: 29px;
    height: 29px;
  }

  .workbench .caret {
    position: absolute;
    top: 20px;
    right: 16px;
    pointer-events: none;
  }

  select {
    width: 100%;
    height: 48px;
    padding: 0 46px;
    border: 2px solid #a3a3a3;
    border-radius: 5px;
    appearance: none;
    background: linear-gradient(#fff, #ebebeb);
    color: inherit;
    font: inherit;
  }

  main {
    display: flex;
    flex: 1;
    min-height: 0;
  }

  aside {
    display: flex;
    flex-direction: column;
    width: 527px;
    margin-bottom: 2px;
  }

  .dock-title {
    display: flex;
    align-items: center;
    gap: 6px;
    height: 38px;
    padding: 1px 3px 0 8px;
    box-sizing: border-box;
  }

  h2 {
    flex: 1;
    font-weight: 400;
  }

  .dock-title svg {
    width: 22px;
    height: 22px;
    fill: none;
    stroke: #5f5d58;
    stroke-width: 2;
  }

  .tabs {
    position: relative;
    z-index: 1;
    display: flex;
    align-items: flex-end;
    height: 51px;
    margin-bottom: -2px;
  }

  .tabs button {
    height: 47px;
    padding: 4px 24px 0 22px;
    border: 2px solid #b4b4b4;
    border-left-width: 0;
    border-radius: 5px 5px 0 0;
    background: #e6e6e6;
  }

  .tabs button.active {
    height: 51px;
    border-bottom: 0;
    border-left-width: 2px;
    background: #fcfcfc;
  }

  .pane {
    display: flex;
    flex: 1;
    flex-direction: column;
    min-height: 0;
    padding: 3px 2px 3px 3px;
    border: 2px solid #acacac;
    border-left-width: 1px;
    background: #fcfcfc;
  }

  .tree {
    display: grid;
    flex: 612 1 0;
    grid-template: 1fr 28px / 1fr 28px;
    min-height: 0;
    border: 1px solid #a8a8a8;
    background: #fff;
  }

  .tree-view {
    min-height: 0;
    overflow: hidden;
  }

  .tree-head {
    height: 38px;
    padding: 7px 5px 0;
    border-bottom: 2px solid #aaa;
    box-sizing: border-box;
    background: linear-gradient(#fcfcfc, #e6e6e6);
  }

  ul {
    margin: 0;
    padding: 0;
    list-style: none;
  }

  li {
    display: flex;
    align-items: center;
    height: 36px;
    padding-left: 57px;
    white-space: nowrap;
  }

  .app-row,
  .doc-row {
    height: 34px;
    padding-left: 7px;
  }

  .doc-row {
    padding-left: 13px;
    font-weight: 700;
  }

  .twist {
    margin-right: 23px;
    border: 8px solid transparent;
    border-right: 0;
    border-left-color: #555;
  }

  .twist.open {
    margin-right: 21px;
    border: 8px solid transparent;
    border-top-color: #555;
    border-bottom: 0;
  }

  .twist.none {
    visibility: hidden;
  }

  .doc-icon {
    width: 26px;
    height: 30px;
    margin-right: 15px;
  }

  .row-icon {
    width: 30px;
    height: 30px;
    margin-right: 13px;
  }

  .vscroll,
  .hscroll {
    display: flex;
    border-left: 1px solid #b4b4b4;
    background: #e4e4e4;
  }

  .vscroll {
    flex-direction: column;
  }

  .hscroll {
    border-top: 1px solid #b4b4b4;
    border-left: 0;
  }

  .vscroll button,
  .hscroll button {
    justify-content: center;
    width: 27px;
    height: 27px;
    background: #fbfbfb;
  }

  .vscroll .thumb {
    flex: 255;
    border: solid #b4b4b4;
    border-width: 2px 0;
    background: #fafafa;
  }

  .vscroll .track {
    flex: 270;
    border-bottom: 2px solid #b4b4b4;
  }

  .hscroll .thumb {
    flex: 238;
    border: solid #b4b4b4;
    border-width: 0 2px;
    background: #fafafa;
  }

  .hscroll .track {
    flex: 195;
    border-right: 2px solid #b4b4b4;
  }

  i {
    border: 8px solid transparent;
  }

  .up {
    border-top: 0;
    border-bottom-color: #555;
  }

  .down {
    border-bottom: 0;
    border-top-color: #555;
  }

  .lt {
    border-left: 0;
    border-right-color: #555;
  }

  .rt {
    border-right: 0;
    border-left-color: #555;
  }

  .corner {
    border: solid #b4b4b4;
    border-width: 1px 0 0 1px;
    background: #efefef;
  }

  .splitter {
    align-self: center;
    width: 34px;
    height: 4px;
    margin: 3px 0;
    background: radial-gradient(circle, #bbb 1px, transparent 2px) 0 0 / 6px 4px;
  }

  .props {
    display: flex;
    flex: 712 1 0;
    flex-direction: column;
  }

  .props-frame {
    display: flex;
    flex: 1;
    padding: 3px;
    border: 1px solid #a8a8a8;
    border-bottom-width: 2px;
  }

  .props-inner {
    flex: 1;
    border: 1px solid #a8a8a8;
    background: #fff;
  }

  table {
    width: 100%;
    border-collapse: collapse;
    background: linear-gradient(#fcfcfc, #e6e6e6);
  }

  th {
    height: 30px;
    padding: 6px 5px 1px;
    border-bottom: 2px solid #aaa;
    font-weight: 400;
    text-align: left;
  }

  .prop {
    width: 189px;
    border-right: 1px solid #bbb;
  }

  .tabs.low {
    align-items: flex-start;
    height: 49px;
    margin: -2px 0 0;
  }

  .tabs.low button {
    height: 47px;
    padding: 2px 24px 0 23px;
    border-radius: 0 0 5px 5px;
    border-left-width: 1px;
  }

  .tabs.low button.active {
    height: 51px;
    border-top: 0;
    border-bottom: 2px solid #acacac;
    background: #fff;
  }

  .vsplit {
    align-self: center;
    width: 8px;
    height: 34px;
    margin-left: 5px;
    background: radial-gradient(circle, #bbb 1px, transparent 2px) 0 0 / 8px 6px;
  }

  .mdi {
    display: flex;
    flex: 1;
    flex-direction: column;
    min-width: 0;
  }

  .viewport {
    flex: 1;
    min-height: 0;
    margin-bottom: 1px;
    overflow: hidden;
    background: linear-gradient(#333366, #53527c 25%, #ababc2);
  }

  .viewport svg {
    width: 100%;
    height: 100%;
  }

  .face {
    font-size: 12px;
    fill: #33343c;
  }

  .face.small {
    font-size: 10px;
    fill: #4a4b55;
  }

  .axis {
    font-size: 10px;
  }

  .doctabs {
    display: flex;
    align-items: flex-start;
    flex: none;
    height: 60px;
    border-top: 2px solid #b8b8b8;
  }

  .doctab {
    display: flex;
    align-items: center;
    height: 54px;
    padding: 2px 32px 0 23px;
    border: solid #b4b4b4;
    border-width: 0 1px 2px;
    border-radius: 0 0 5px 5px;
    box-sizing: border-box;
    background: #dcdcdc;
  }

  .doctab.active {
    height: 60px;
    margin-top: -2px;
    padding: 4px 31px 0 21px;
    border-color: #a8a8a8;
    background: linear-gradient(#efefef, #fafafa);
  }

  .doctab .logo {
    width: 32px;
    height: 32px;
    margin-right: 9px;
  }

  .docclose {
    margin-left: 12px;
  }

  .docclose svg {
    width: 28px;
    height: 28px;
  }

  footer {
    display: flex;
    flex: none;
    align-items: center;
    height: 59px;
    padding: 4px 11px 0 3px;
    box-sizing: border-box;
  }

  .message {
    flex: 1;
  }

  footer button span {
    flex: 1;
    text-align: left;
  }

  footer svg {
    width: 30px;
    height: 30px;
    margin-right: 9px;
  }

  footer .caret {
    border: 6px solid transparent;
    border-top: 8px solid #555;
    border-bottom: 0;
  }

  .notify {
    width: 149px;
    margin-right: 41px;
  }

  .nav {
    width: 160px;
    margin-right: 31px;
  }

  .nav svg {
    margin-right: 6px;
  }

  .dims {
    gap: 10px;
  }
</style>
